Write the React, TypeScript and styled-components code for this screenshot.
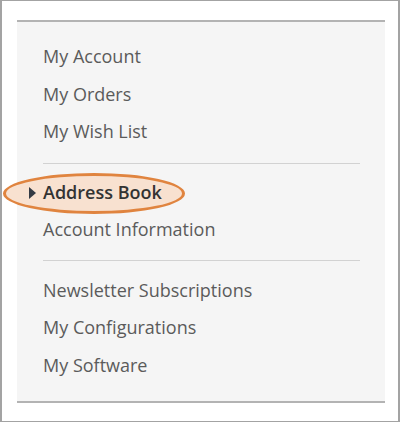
import React from "react";
import styled, { createGlobalStyle } from "styled-components";

const Global = createGlobalStyle`
  html, body { margin: 0; padding: 0; background: #ffffff; }
  body { font-family: "Open Sans", "Liberation Sans", sans-serif; }
`;

const Frame = styled.div`
  box-sizing: border-box;
  width: 400px;
  height: 422px;
  border: 1px solid #a3a3a3;
  border-left-width: 2px;
  border-right-width: 2px;
  background: #ffffff;
  padding: 19px 13px 0 15px;
`;

const Panel = styled.nav`
  box-sizing: border-box;
  width: 368px;
  height: 383px;
  background: #f5f5f5;
  border-top: 2px solid #b3b3b3;
  border-bottom: 2px solid #b3b3b3;
  padding: 16px 25px 0 26px;
`;

const Group = styled.ul`
  list-style: none;
  margin: 0;
  padding: 0;
`;

const Divider = styled.hr`
  border: 0;
  border-top: 1px solid #d2d2d2;
  margin: ${(p: { $top: number; $bottom: number }) => `${p.$top}px 0 ${p.$bottom}px`};
  height: 0;
`;

const Item = styled.li<{ $current?: boolean }>`
  position: relative;
  height: 37.5px;
  line-height: 37.5px;
  font-size: 18px;
  color: ${(p) => (p.$current ? "#333333" : "#5b5b5b")};
  font-weight: ${(p) => (p.$current ? 600 : 400)};
  white-space: nowrap;
`;

const Label = styled.span`
  position: relative;
`;

const Highlight = styled.span`
  position: absolute;
  left: -40px;
  top: -1px;
  width: 182px;
  height: 41px;
  box-sizing: border-box;
  border: 3px solid #e0843f;
  border-radius: 50%;
  background: #f8e1d0;
`;

const Arrow = styled.svg`
  position: absolute;
  left: -14px;
  top: 13px;
`;

const groups = [
  ["My Account", "My Orders", "My Wish List"],
  ["Address Book", "Account Information"],
  ["Newsletter Subscriptions", "My Configurations", "My Software"],
];

export default function App() {
  return (
    <>
      <Global />
      <Frame>
        <Panel>
          {groups.map((g, gi) => (
            <React.Fragment key={gi}>
              {gi > 0 && (
                <Divider $top={gi === 1 ? 12 : 11} $bottom={gi === 1 ? 10 : 11} />
              )}
              <Group>
                {g.map((label) => {
                  const current = label === "Address Book";
                  return (
                    <Item key={label} $current={current}>
                      {current && <Highlight />}
                      {current && (
                        <Arrow width="7" height="12" viewBox="0 0 7 12">
                          <path d="M0 0 L7 6 L0 12 Z" fill="#333a44" />
                        </Arrow>
                      )}
                      <Label>{label}</Label>
                    </Item>
                  );
                })}
              </Group>
            </React.Fragment>
          ))}
        </Panel>
      </Frame>
    </>
  );
}
